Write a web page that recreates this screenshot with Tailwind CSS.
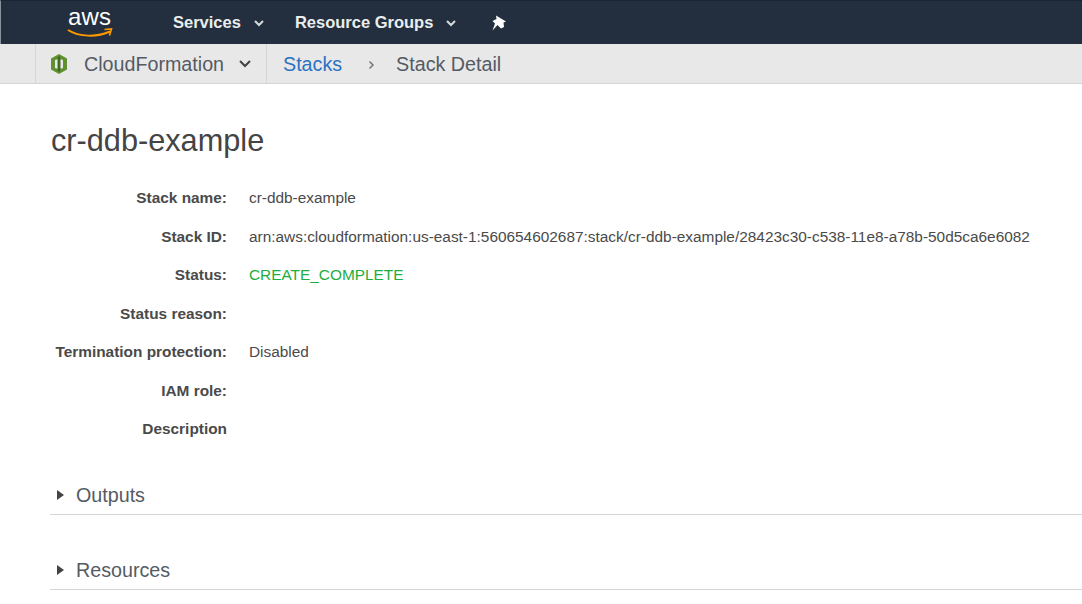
<!DOCTYPE html>
<html lang="en">
  <head>
    <meta charset="UTF-8" />
    <script src="https://cdn.jsdelivr.net/npm/@tailwindcss/browser@4"></script>
    <title>Stack Detail</title>
  </head>
  <body class="bg-white font-['Liberation_Sans',sans-serif] overflow-hidden h-[604px]">
    <header class="h-[44px] bg-[#232f3e] flex items-center text-white font-bold text-[16.5px] border-t border-[#1b2531] border-l border-l-[#8a929c]">
      <div class="w-[172px] pl-[66px] flex flex-col shrink-0">
        <svg width="46" height="36" viewBox="0 0 46 36" class="mt-[-2px]">
          <text x="1" y="21" fill="#fff" font-family="Liberation Sans" font-size="24" font-weight="400" textLength="43">aws</text>
          <path d="M1 26 C12 33 30 33.5 43 27.5" fill="none" stroke="#f90" stroke-width="2"/>
          <path d="M37.5 25.5 L44.5 25 L42.5 31.5" fill="none" stroke="#f90" stroke-width="1.6"/>
        </svg>
      </div>
      <span class="text-[#eaeded]">Services</span>
      <svg width="10" height="7" viewBox="0 0 10 7" class="ml-[13px] mt-[2px]"><path d="M1 1l4 4 4-4" fill="none" stroke="#d5dbdb" stroke-width="2"/></svg>
      <span class="ml-[31px] text-[#eaeded]">Resource Groups</span>
      <svg width="10" height="7" viewBox="0 0 10 7" class="ml-[13px] mt-[2px]"><path d="M1 1l4 4 4-4" fill="none" stroke="#d5dbdb" stroke-width="2"/></svg>
      <svg width="16" height="16" viewBox="0 0 16 16" class="ml-[35px]"><path d="M5 0.5 L15 6.5 L12.5 7.5 L13 12 L10 13.5 L6.5 10 L1.5 15.5 L4 8.5 L1.5 6 L5.5 4 Z" fill="#fff"/></svg>
    </header>
    <nav class="h-[40px] bg-[#e8e8e8] border-b border-[#d5d5d5] flex items-center text-[19.7px] text-[#545b64]">
      <div class="ml-[35px] w-[232px] h-full border-x border-[#d5d5d5] flex items-center">
        <svg width="18" height="22" viewBox="0 0 18 22" class="ml-[14px]">
          <path d="M9 1 L17 5.5 V16.5 L9 21 L1 16.5 V5.5 Z" fill="#5f9130"/>
          <path d="M8 3.5 H10 L10.5 6.5 V15.5 L10 18.5 H8 L7.5 15.5 V6.5 Z" fill="#3f6b1f"/>
          <path d="M5 7 L7.5 6.2 V15.8 L5 15 Z M10.5 6.2 L13 7 V15 L10.5 15.8 Z" fill="#e8e8e8"/>
        </svg>
        <span class="ml-[16px] mt-[2px]">CloudFormation</span>
        <svg width="14" height="8" viewBox="0 0 14 8" class="ml-[14px]"><path d="M2 1l5 5 5-5" fill="none" stroke="#444" stroke-width="2"/></svg>
      </div>
      <a href="#" class="ml-[16px] mt-[2px] text-[#2a72c3]">Stacks</a>
      <svg width="7" height="10" viewBox="0 0 7 10" class="ml-[26px] mt-[2px]"><path d="M1.5 1.5l3.5 3.5-3.5 3.5" fill="none" stroke="#777" stroke-width="1.5"/></svg>
      <span class="ml-[21px] mt-[2px]">Stack Detail</span>
    </nav>
    <main class="pl-[50px]">
      <h1 class="mt-[37px] ml-[1px] text-[30.7px] leading-[40px] text-[#444]">cr-ddb-example</h1>
      <dl class="mt-[18px] grid grid-cols-[177px_1fr] gap-x-[22px] auto-rows-[38.5px] text-[15.4px] leading-[38.5px] text-[#4a4a4a]">
        <dt class="font-bold text-right">Stack name:</dt><dd>cr-ddb-example</dd>
        <dt class="font-bold text-right">Stack ID:</dt><dd class="whitespace-nowrap">arn:aws:cloudformation:us-east-1:560654602687:stack/cr-ddb-example/28423c30-c538-11e8-a78b-50d5ca6e6082</dd>
        <dt class="font-bold text-right">Status:</dt><dd class="text-[#1cae3e]">CREATE_COMPLETE</dd>
        <dt class="font-bold text-right">Status reason:</dt><dd></dd>
        <dt class="font-bold text-right whitespace-nowrap">Termination protection:</dt><dd>Disabled</dd>
        <dt class="font-bold text-right">IAM role:</dt><dd></dd>
        <dt class="font-bold text-right">Description</dt><dd></dd>
      </dl>
      <section class="mt-[27px] h-[39px] border-b border-[#d5d5d5] flex items-center text-[19.7px] text-[#545b64]">
        <span class="ml-[7px] w-0 h-0 border-y-[5px] border-y-transparent border-l-[7px] border-l-[#444]"></span>
        <span class="ml-[12px] mt-[2px]">Outputs</span>
      </section>
      <section class="mt-[36px] h-[39px] border-b border-[#d5d5d5] flex items-center text-[19.7px] text-[#545b64]">
        <span class="ml-[7px] w-0 h-0 border-y-[5px] border-y-transparent border-l-[7px] border-l-[#444]"></span>
        <span class="ml-[12px] mt-[2px]">Resources</span>
      </section>
    </main>
  </body>
</html>
